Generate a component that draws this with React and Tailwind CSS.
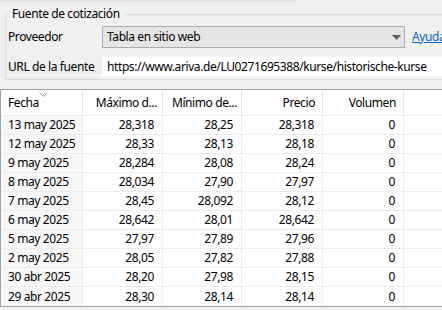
import React from "react";

const rows = [
  ["13 may 2025", "28,318", "28,25", "28,318", "0"],
  ["12 may 2025", "28,33", "28,13", "28,18", "0"],
  ["9 may 2025", "28,284", "28,08", "28,24", "0"],
  ["8 may 2025", "28,034", "27,90", "27,97", "0"],
  ["7 may 2025", "28,45", "28,092", "28,12", "0"],
  ["6 may 2025", "28,642", "28,01", "28,642", "0"],
  ["5 may 2025", "27,97", "27,89", "27,96", "0"],
  ["2 may 2025", "28,05", "27,82", "27,88", "0"],
  ["30 abr 2025", "28,20", "27,98", "28,15", "0"],
  ["29 abr 2025", "28,30", "28,14", "28,14", "0"],
];

const cols = ["w-[82px]", "w-[80px]", "w-[79px]", "w-[81px]", "w-[81px]"];

const App = () => {
  return (
    <div
      className="w-[442px] h-[310px] overflow-hidden bg-[#f0f0f0] text-[12px] tracking-[-0.4px] text-black"
      style={{ fontFamily: '"Noto Sans", "Segoe UI", sans-serif' }}
    >
      <div className="h-[2px] w-[297px] bg-[#e3e3e3]" />

      {/* grupo: fuente de cotización */}
      <fieldset className="ml-[5px] mt-[4px] w-[480px] border-t border-l border-b border-[#dcdcdc] pl-[2px] pb-[2px]">
        <legend className="px-[4px] leading-[16px]">Fuente de cotización</legend>
        <div className="flex items-center mt-[4px] h-[22px]">
          <span className="w-[94px] leading-[16px]">Proveedor</span>
          <div className="flex items-center w-[303px] h-[22px] border border-[#adadad] bg-[#e5e5e5]">
            <span className="flex-1 pl-[4px] leading-[16px]">Tabla en sitio web</span>
            <div className="w-[16px] h-full flex items-center justify-center">
              <svg width="9" height="5" viewBox="0 0 9 5">
                <path d="M0 0 L9 0 L4.5 5 Z" fill="#606060" />
              </svg>
            </div>
          </div>
          <a className="ml-[7px] text-[#0066cc] underline leading-[16px]">Ayuda</a>
        </div>
        <div className="flex items-center mt-[8px] h-[21px]">
          <span className="w-[94px] leading-[16px]">URL de la fuente</span>
          <div className="flex items-center w-[360px] h-[21px] bg-white border border-[#f5f5f5] pl-[4px] whitespace-nowrap leading-[16px]">
            https://www.ariva.de/LU0271695388/kurse/historische-kurse
          </div>
        </div>
      </fieldset>

      {/* tabla de cotizaciones */}
      <div className="mt-[9px] w-[460px] border-t border-l border-b border-[#a0a0a0] bg-white">
        <div className="flex h-[26px] border-b border-[#ececec]">
          <div className={`${cols[0]} relative flex items-end pb-[3px] pl-[7px] border-r border-[#e5e5e5]`}>
            Fecha
            <svg className="absolute left-[38px] top-[2px]" width="9" height="5" viewBox="0 0 9 5">
              <path d="M0.5 0.5 L4.5 4.5 L8.5 0.5" fill="none" stroke="#a0a0a0" strokeWidth="1" />
            </svg>
          </div>
          <div className={`${cols[1]} flex items-end justify-end pb-[3px] pr-[5px] border-r border-[#e5e5e5]`}>Máximo d...</div>
          <div className={`${cols[2]} flex items-end justify-end pb-[3px] pr-[4px] border-r border-[#e5e5e5]`}>Mínimo de...</div>
          <div className={`${cols[3]} flex items-end justify-end pb-[3px] pr-[7px] border-r border-[#e5e5e5]`}>Precio</div>
          <div className={`${cols[4]} flex items-end justify-end pb-[3px] pr-[7px] border-r border-[#e5e5e5]`}>Volumen</div>
          <div className="flex-1" />
        </div>
        {rows.map((r, i) => (
          <div key={i} className={`flex h-[19px] ${i < rows.length - 1 ? "border-b" : "border-b-0 h-[18px]"} border-[#ececec]`}>
            <div className={`${cols[0]} flex items-center pl-[7px] bg-[#f7f7f7] border-r border-[#ececec]`}>{r[0]}</div>
            {r.slice(1).map((v, j) => (
              <div key={j} className={`${cols[j + 1]} flex items-center justify-end pr-[8px] border-r border-[#ececec]`}>{v}</div>
            ))}
            <div className="flex-1" />
          </div>
        ))}
      </div>
    </div>
  );
};

export default App;
